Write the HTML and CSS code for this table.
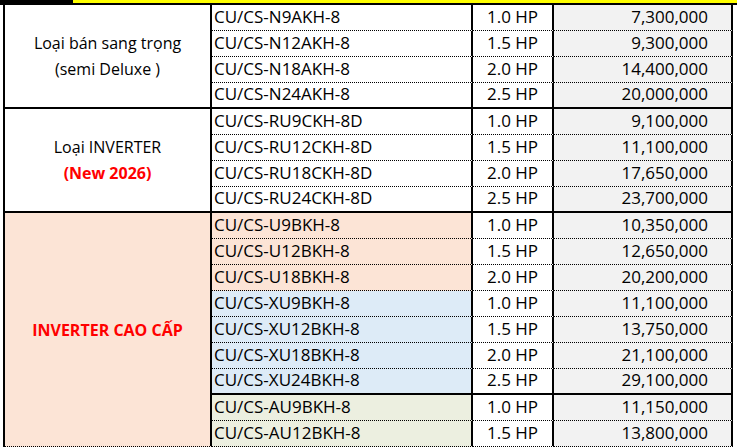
FILE: index.html
```html
<!DOCTYPE html>
<html lang="vi">
<head>
<meta charset="utf-8">
<title>Bảng giá</title>
<link rel="stylesheet" href="styles.css">
</head>
<body>
<div class="topbar"><div class="topbar-mark"></div></div>
<table class="sheet">
  <colgroup>
    <col class="c-cat"><col class="c-model"><col class="c-hp"><col class="c-price">
  </colgroup>
  <tbody>
    <tr>
      <td class="cat end" rowspan="4"><div>Loại bán sang trọng</div><div>(semi Deluxe )</div></td>
      <td class="model">CU/CS-N9AKH-8</td><td class="hp">1.0 HP</td><td class="price">7,300,000</td>
    </tr>
    <tr><td class="model">CU/CS-N12AKH-8</td><td class="hp">1.5 HP</td><td class="price">9,300,000</td></tr>
    <tr><td class="model">CU/CS-N18AKH-8</td><td class="hp">2.0 HP</td><td class="price">14,400,000</td></tr>
    <tr class="end"><td class="model">CU/CS-N24AKH-8</td><td class="hp">2.5 HP</td><td class="price">20,000,000</td></tr>

    <tr>
      <td class="cat end" rowspan="4"><div>Loại INVERTER</div><div class="red">(New 2026)</div></td>
      <td class="model">CU/CS-RU9CKH-8D</td><td class="hp">1.0 HP</td><td class="price">9,100,000</td>
    </tr>
    <tr><td class="model">CU/CS-RU12CKH-8D</td><td class="hp">1.5 HP</td><td class="price">11,100,000</td></tr>
    <tr><td class="model">CU/CS-RU18CKH-8D</td><td class="hp">2.0 HP</td><td class="price">17,650,000</td></tr>
    <tr class="end"><td class="model">CU/CS-RU24CKH-8D</td><td class="hp">2.5 HP</td><td class="price">23,700,000</td></tr>

    <tr>
      <td class="cat peach" rowspan="9"><div class="red">INVERTER CAO CẤP</div></td>
      <td class="model peach">CU/CS-U9BKH-8</td><td class="hp">1.0 HP</td><td class="price">10,350,000</td>
    </tr>
    <tr><td class="model peach">CU/CS-U12BKH-8</td><td class="hp">1.5 HP</td><td class="price">12,650,000</td></tr>
    <tr><td class="model peach">CU/CS-U18BKH-8</td><td class="hp">2.0 HP</td><td class="price">20,200,000</td></tr>
    <tr><td class="model blue">CU/CS-XU9BKH-8</td><td class="hp">1.0 HP</td><td class="price">11,100,000</td></tr>
    <tr><td class="model blue">CU/CS-XU12BKH-8</td><td class="hp">1.5 HP</td><td class="price">13,750,000</td></tr>
    <tr><td class="model blue">CU/CS-XU18BKH-8</td><td class="hp">2.0 HP</td><td class="price">21,100,000</td></tr>
    <tr class="end"><td class="model blue">CU/CS-XU24BKH-8</td><td class="hp">2.5 HP</td><td class="price">29,100,000</td></tr>
    <tr><td class="model olive">CU/CS-AU9BKH-8</td><td class="hp">1.0 HP</td><td class="price">11,150,000</td></tr>
    <tr><td class="model olive">CU/CS-AU12BKH-8</td><td class="hp">1.5 HP</td><td class="price">13,800,000</td></tr>
  </tbody>
</table>
</body>
</html>
```

FILE: styles.css
```css
* { box-sizing: border-box; }

body {
  margin: 0;
  background: #fff;
  color: #000;
  font-family: "Open Sans", "Liberation Sans", sans-serif;
  font-size: 16px;
  overflow: hidden;
}

.topbar {
  display: flex;
  height: 5px;
  background: #ffff00;
  border-bottom: 2px solid #000;
}

.topbar-mark {
  width: 73px;
  background: #000;
}

.sheet {
  margin-left: 3px;
  width: 730px;
  table-layout: fixed;
  border-collapse: separate;
  border-spacing: 0;
  border-left: 2px solid #000;
}

.c-cat { width: 207px; }
.c-model { width: 261px; }
.c-hp { width: 81px; }
.c-price { width: 179px; }

.sheet tr { height: 26px; }

.sheet td {
  padding: 0 0 2px;
  font-size: 17px;
  line-height: 20px;
  white-space: nowrap;
  border-right: 2px solid #000;
  border-bottom: 1px dotted #000;
  vertical-align: middle;
}

.sheet tr.end td,
.sheet td.end {
  border-bottom: 2px solid #000;
}

.sheet td.cat {
  text-align: center;
  font-size: 16px;
  line-height: 26px;
  padding-bottom: 0;
}

.model { padding-left: 2px !important; }
.hp { text-align: center; }
.price {
  text-align: right;
  padding-right: 23px !important;
  background: #f2f2f2;
}

.red {
  color: #ff0000;
  font-weight: 700;
}

.peach { background: #fce4d6; }
.blue { background: #ddebf7; }
.olive { background: #ecefe0; }
```
